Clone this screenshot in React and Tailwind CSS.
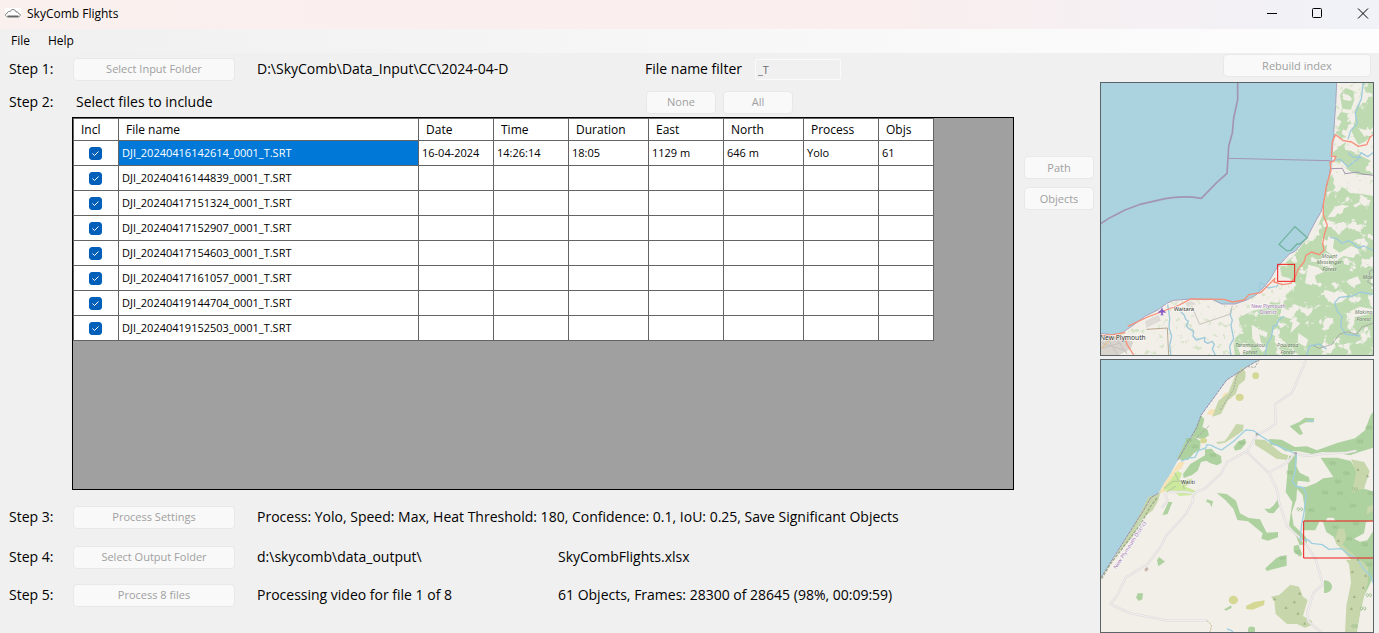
import { useState } from "react";

const FILES = [
  { name: "DJI_20240416142614_0001_T.SRT", cells: ["16-04-2024", "14:26:14", "18:05", "1129 m", "646 m", "Yolo", "61"] },
  { name: "DJI_20240416144839_0001_T.SRT", cells: [] },
  { name: "DJI_20240417151324_0001_T.SRT", cells: [] },
  { name: "DJI_20240417152907_0001_T.SRT", cells: [] },
  { name: "DJI_20240417154603_0001_T.SRT", cells: [] },
  { name: "DJI_20240417161057_0001_T.SRT", cells: [] },
  { name: "DJI_20240419144704_0001_T.SRT", cells: [] },
  { name: "DJI_20240419152503_0001_T.SRT", cells: [] },
];

const COLUMNS = [
  { title: "Incl", width: "w-[45px]" },
  { title: "File name", width: "w-[300px]" },
  { title: "Date", width: "w-[75px]" },
  { title: "Time", width: "w-[75px]" },
  { title: "Duration", width: "w-[80px]" },
  { title: "East", width: "w-[75px]" },
  { title: "North", width: "w-[80px]" },
  { title: "Process", width: "w-[75px]" },
  { title: "Objs", width: "w-[55px]" },
];

function DisabledButton({ children, className }) {
  return (
    <button
      type="button"
      disabled
      className={`flex h-[23px] shrink-0 items-center justify-center rounded border border-[#e8e8e8] bg-[#f9f9f9] text-[11px] text-[#a0a0a0] ${className}`}
    >
      {children}
    </button>
  );
}

function StepLabel({ children }) {
  return <span className="w-16 shrink-0">{children}</span>;
}

function TitleBar() {
  return (
    <header className="flex h-[29px] items-center bg-linear-to-r from-[#faf0ee] via-[#faeeee] via-65% to-[#f0f2f8] pb-0.5">
      <svg className="ml-1 h-4 w-[18px]" viewBox="0 0 18 16" fill="none">
        <rect x="1" y="2" width="16" height="10" fill="#fff" />
        <path d="M3.5 11C1 10.500.9 7.800 3.200 7.300 3.600 5.500 5.200 5 6.200 5.600 7 2.900 11.200 2.800 12 5.900c2-.2 2.300.7 2.500 1.600 2.300.2 2.400 3.200 0 3.500" stroke="#777" strokeWidth="1" />
        <path d="M3.500 10.500h11" stroke="#666" strokeWidth="2" />
      </svg>
      <h1 className="ml-[5px] flex-1 text-xs">SkyComb Flights</h1>
      <div className="flex h-full">
        <button type="button" aria-label="Minimize" className="flex w-[45px] items-center justify-center">
          <svg width="12" height="12" viewBox="0 0 12 12" stroke="#000"><path d="M1 5.500h10" /></svg>
        </button>
        <button type="button" aria-label="Maximize" className="flex w-[46px] items-center justify-center">
          <svg width="12" height="12" viewBox="0 0 12 12" fill="none" stroke="#000"><rect x="1.500" y=".500" width="9" height="9" rx="1" /></svg>
        </button>
        <button type="button" aria-label="Close" className="flex w-[39px] items-center justify-center pl-1.5">
          <svg width="12" height="12" viewBox="0 0 12 12" fill="none" stroke="#000"><path d="M1 .500l10 10M11 .500l-10 10" /></svg>
        </button>
      </div>
    </header>
  );
}

function FileTable() {
  const [included, setIncluded] = useState(FILES.map(() => true));
  const toggle = (i) => setIncluded(included.map((v, k) => (k === i ? !v : v)));
  return (
    <table className="table-fixed border-separate border-spacing-0 border-t border-l border-[#646464] bg-white text-xs">
      <thead>
        <tr className="h-[22px]">
          {COLUMNS.map((c) => (
            <th key={c.title} className={`border-r border-b border-[#646464] py-0 pl-[7px] text-left font-normal ${c.width}`}>
              {c.title}
            </th>
          ))}
        </tr>
      </thead>
      <tbody>
        {FILES.map((f, i) => (
          <tr key={f.name} className="h-[25px]">
            <td className="border-r border-b border-[#646464] p-0">
              <div className="grid place-items-center pr-[2px]">
                <input
                  type="checkbox"
                  aria-label={`Include ${f.name}`}
                  checked={included[i]}
                  onChange={() => toggle(i)}
                  className="[grid-area:1/1] size-[13px] appearance-none rounded-[3px] border border-[#005fb8] bg-white checked:bg-[#005fb8]"
                />
                {included[i] && (
                  <svg className="pointer-events-none [grid-area:1/1]" width="13" height="13" viewBox="0 0 13 13" fill="none" stroke="#fff">
                    <path d="M3.500 6.500l2 2 4-4" />
                  </svg>
                )}
              </div>
            </td>
            <td className={`border-r border-b border-[#646464] py-0 pl-[3px] text-[11px] ${i === 0 ? "bg-[#0078d7] text-white" : ""}`}>
              {f.name}
            </td>
            {COLUMNS.slice(2).map((c, k) => (
              <td key={c.title} className="border-r border-b border-[#646464] py-0 pl-[3px] text-[11px]">
                {f.cells[k]}
              </td>
            ))}
          </tr>
        ))}
      </tbody>
    </table>
  );
}

function RegionMap() {
  const coast =
    "M725 12L722 80 716 165 710 245 703 290 692 350 678 402 665 424 650 452 637 478 618 500 600 520 583 528 570 542 545 570 525 605 500 635 480 653 455 666 420 678 380 678 350 663 330 665 290 663 235 667 215 676 190 695 150 715 110 745 80 765 50 770 15 766";
  const forest =
    "M735 50L752 30 775 38 778 65 768 95 742 92ZM803 12H837V165L812 190 790 200 776 175 738 180 722 165 740 130 724 122 738 102 770 108 790 75ZM735 205L752 192 750 215 768 218 830 250 837 292 790 290 765 280 725 250 712 225ZM704 295L725 300 720 322 748 330 765 345 837 350V834H420L415 790 440 755 430 720 470 700 510 690 540 660 570 655 605 620 582 600 560 595 555 568 595 535 638 480 652 484 685 405 690 350Z";
  const gaps =
    "M712 285l30 0 10 24 36 18 49 14v14l-30-6-12-16-30-4-6-22-26 4-10 20ZM700 474l18 8-4 28 20 14 34-20 24 10-16 26-30-6-24 16-10-18-18-14ZM640 560l30 8 16 14-24 10-12 30-20-6ZM690 635l40 12 14 24-30 6-24-20ZM560 690l40 12-8 20 24 14-30 30 10-40-40-14ZM610 765l30 20-8 22-24-14ZM470 740l20 12 8 40 18 20-14 10-30-40ZM760 605l28-10 10 20-28 12ZM765 700l30-14 42 8v12l-60 12ZM716 392l24-12 24 4-28 12-16 20-22 2ZM790 150l30 8-10 20Z";
  return (
    <svg className="block h-auto w-full" viewBox="15 12 822 822" role="img" aria-label="Region map">
      <defs>
        <clipPath id="region-land"><path d={`${coast}V834H837V12Z`} /></clipPath>
        <clipPath id="region-forest"><path d={forest} /></clipPath>
        <filter id="clearings" x="0" y="0" width="1" height="1" colorInterpolationFilters="sRGB">
          <feTurbulence type="fractalNoise" baseFrequency=".028" numOctaves="4" seed="8" />
          <feColorMatrix values="0 0 0 0 .949  0 0 0 0 .937  0 0 0 0 .914  14 0 0 0 -8" />
        </filter>
        <filter id="scrub" x="0" y="0" width="1" height="1" colorInterpolationFilters="sRGB">
          <feTurbulence type="fractalNoise" baseFrequency=".06" numOctaves="3" seed="21" />
          <feColorMatrix values="0 0 0 0 .8  0 0 0 0 .88  0 0 0 0 .74  14 0 0 0 -9" />
        </filter>
      </defs>
      <rect x="15" y="12" width="822" height="822" fill="#aad3df" />
      <path d={`${coast}V834H837V12Z`} fill="#f2efe9" stroke="#a9a3c0" strokeWidth="3" />
      <g clipPath="url(#region-land)">
        <rect x="15" y="12" width="822" height="822" filter="url(#scrub)" opacity=".7" />
        <path d={forest} fill="#bddab1" />
        <g clipPath="url(#region-forest)">
          <rect x="400" y="12" width="437" height="822" filter="url(#clearings)" />
        </g>
        <path d={gaps} fill="#f2efe9" />
        <path d="M15 790l30-14 40 2 30 14-8 20-40 22H15Z" fill="#d9d3ce" />
        <path d="M150 730l40-20 8 18-44 22ZM270 675l20-6 14 10-28 6Z" fill="#dedad6" />
        <path d="M22 796l70 22M38 782l30 50M60 776l36 52M15 812l80-22" stroke="#c8c2c0" strokeWidth="3" fill="none" />
      </g>
      <g fill="none" stroke="#9ecadb" strokeWidth="4" strokeLinejoin="round">
        <path d="M805 12l-6 50-18 44 6 30-20 22-8 26M715 165l6 8M712 248l24-4 22 22 30-22 10-20 20 12 19-14M760 225l14 12 26 2M705 478l20 4 16 14 20-8 16 10 12 12 18-6 30 14M540 626l-20 4-24-18-4 34M550 620l-8 8" />
        <path d="M218 680l6 40-2 30 8 24-6 28 4 32M256 700l12 12 4 12 8 6-6 14 8 8 14 8-2 14 10 12 26-8-2 12 10 6 14-6 6 10-6 12 10 22M410 690l-4 22 6 14-4 16 8 40-12 22 4 30M566 715l-16 12-4 14-12 4-4 30-14 24-6 35M837 650l-40-8-24 12-40 4-14 16 8 26 14 16-4 28 14 24 44 6M635 834l8-30 30-6 22 16" />
      </g>
      <g fill="none" stroke="#a395b1" strokeWidth="5" strokeLinejoin="round">
        <path d="M428 12V65L416 120 412 165 401 205 399 240 396 286 365 314 319 361Q265 352 210 362L132 380 90 396 45 419 15 438" />
        <path d="M399 241L706 248" strokeWidth="3" />
        <path d="M706 250l2 22 34-1 8 16 38-5 12 6 37 4" strokeWidth="3" />
      </g>
      <path d="M837 573l-14 8 2 20-8 10 20 12M837 735l-36 12-16 22-28-8-24 8-22 30-38 12-18-8" fill="none" stroke="#9b979d" strokeWidth="2" />
      <g fill="none" stroke="#c9c3ba" strokeWidth="3">
        <path d="M290 684l24 55 90-30 8-26" />
        <path d="M155 754l62-4 4 84" stroke="#b9a890" />
        <path d="M15 815l28-28 40-20" stroke="#e8bb70" />
      </g>
      <g fill="none" stroke="#f78f78" strokeWidth="4" strokeLinejoin="round">
        <path d="M837 168l-12 10-10 22-25 5-20-13-25-4-23-18-10 20-3 45h14l-6 14-12 4 3 25-13 42-10 60v30l12 32-8 24-6 30 4 20-14 14-24-8-16 10-6 20-18 22-8 22-14 20-24 4-26-8 2-10-42 42-35 6-15 16-34 6-26-8-100-1-34 18-95 36-60 28" />
        <path d="M90 775l6 24 20 32M15 772l42-2 34-6" />
      </g>
      <path d="M552 499L600 446 637 479 614 498 606 498 588 517 575 518Z" fill="none" stroke="#72b49f" strokeWidth="4" />
      <path d="M201 688l3 8 8 6v3l-8-2-1 6 4 3h-12l4-3-1-6-8 2v-3l8-6Z" fill="#8057c4" />
      <g fontFamily="'Noto Sans', sans-serif" stroke="#fff" strokeOpacity=".65" strokeWidth="4" paintOrder="stroke">
        <text x="236" y="700" fontSize="17" fill="#333">Waitara</text>
        <text x="15" y="786" fontSize="20" fill="#333">New Plymouth</text>
        <g fontStyle="italic" fontSize="16" textAnchor="middle" fill="#6d8068" strokeOpacity=".25">
          <text x="703" y="540">Mount</text>
          <text x="703" y="559">Messenger</text>
          <text x="703" y="578">Forest</text>
          <text x="818" y="602">Mok</text>
          <text x="806" y="709">Makino</text>
          <text x="806" y="728">Forest</text>
          <text x="465" y="808">Taramoukou</text>
          <text x="465" y="827">Forest</text>
          <text x="578" y="808">Pouiatoa</text>
          <text x="578" y="827">Forest</text>
        </g>
        <g fontSize="15" textAnchor="middle" fill="#a174b0">
          <text x="520" y="690">New Plymouth</text>
          <text x="520" y="708">District</text>
        </g>
      </g>
      <rect x="548" y="559" width="51" height="51" fill="none" stroke="#f01818" strokeWidth="3" />
      <rect x="16.500" y="13.500" width="819" height="819" fill="none" stroke="#5a6468" strokeWidth="3" />
    </svg>
  );
}

const TREES = [
  [822, 215], [795, 257], [713, 322], [755, 352], [729, 377], [780, 400], [828, 412], [690, 410], [649, 463], [714, 458], [774, 449], [735, 412],
  [722, 514], [783, 503], [762, 549], [810, 566], [822, 626], [805, 758], [779, 811], [300, 272], [282, 252], [354, 298], [608, 589], [562, 606], [584, 350], [440, 262], [822, 718], [615, 460],
];
const SHRUBS = [
  [789, 341], [817, 360], [789, 610], [772, 647], [812, 658], [805, 695], [778, 722], [769, 758], [730, 554], [539, 729], [614, 712], [598, 738], [573, 755], [609, 772], [629, 802],
];

function DetailMap() {
  const coast =
    "M497 9L460 30 395 72 318 178 305 215 275 265 250 310 220 365 190 412 168 424 140 472 100 535 60 598 15 670V831H837V9Z";
  const roads =
    "M634 9l-20 48-24 54-50 34 2 58-16 12-40 22-30 48-60 34-18 34-48 44-34 14-4 28-20 36-58 64-20 38-36 46-66 42-26 54-22 28M454 286l66 64 60-32 20-28M522 350l24 52 6 36 24 72 56 52 30 48 22 76-28 24-20 62 4 24 40 34M600 292l34 8 70-8 52-2 28-6M48 746l60 26 110 22h120M296 414l-20-6h-54M210 412l8 22-18 22";
  return (
    <svg className="block h-auto w-full" viewBox="15 9 822 822" role="img" aria-label="Flight area map">
      <rect x="15" y="9" width="822" height="822" fill="#aad3df" />
      <path d={coast} fill="#f2efe9" />
      <g fill="#f8e2b8">
        <path d="M396 107l-12 8-4 22 14-4ZM368 160l-22 0-12 14 26 6ZM320 180l-12 38 4 12 14-30ZM252 318l18 0-12 20-16 8-32 62-18 4 16-32 30-42Z" />
      </g>
      <g fill="#aed1a0">
        <path d="M318 178l10 12-6 22 16 10 4 16-18 12-34-8 14-30Z" />
        <path d="M275 250l20-8 22 14-2 24-18 12-18 20-20 0-12-6ZM330 280l20-2 10 12 18 10 2 20-14 8-20-6-12-8-16 4-10 26-18 14-24 8-2-12 22-30 24-14 20-12Z" />
        <path d="M416 274l14-18 20-8 4 12-16 20-18 4ZM584 211l30-14 16-12 28 2-2 12-24 0-20 10 12 24-10 4-18-16Z" />
        <path d="M522 249l38 2 40 22 36-2 30 12 60-22 54-14 30-24 16-44 13-18V274l-46 14-28 10-40-8-44-2-30 6-40-8-40 0-22-16-24-4Z" />
        <path d="M677 305h50l40 10 20 34-8 40 58 18v92l-14 12-30-12-40 30-22-20-16-24-18 0-18 38-56 0 8-54-8-52-24-26 34 2 30-12 22-14 30-4Z" />
        <path d="M582 300l24-4-2 34 10 20 28 14 2 14-36-4-4 56-14 40 6 38 40 38v18l-22 4-14-36-18-24 10-70-20-30Z" />
        <path d="M682 495h155V660l-30 60-12 52-10 59h-24l10-56 24-34 4-60-30-48-26-36-30-20-24-30Z" />
        <path d="M365 411l30 3 28 20 12 38 26 14 34 4 20 40 34-2v16l-30 10-20-6 4-16-44-36-32-4-12-34-24-26ZM508 458l16 0 12-10 14-20 2 24-16 20-16-2ZM220 438h12l-14 36-16 4ZM336 430l18 6-4 18-6-12-10-4ZM192 603l18 14-20 14-4-18ZM128 712l16 0-2 18-10 5-9-10ZM575 597v32l-60 16-4-8 34-32ZM596 570l14-4 12 30-8 6-18-16ZM687 673c32 0 32 38 0 38ZM388 760l20-12 2 8-18 8ZM460 815q10-7 20 0v16h-22Z" />
      </g>
      <g fill="#c8d7ab">
        <path d="M442 32l10 18-2 22-18 14-10 28-24 20-20 40-26 8 18-48 30-24 20-50ZM362 258l26-2 10-12 26-40 22 2-2 18-26 18-28 18-20 4ZM480 250l30 2 50 40 20 6-4 14-32-4-64-42ZM190 414l8-12-8 30-16 30-30 24-34 60-48 54-38 62 80-134 28-48 28-58Z" />
        <path d="M768 310l40 8 16 28-16 50-38 14 14-60ZM730 518l18 0 6 28-12 20 42 36 36 30-2 50-20 68-14 80h-34l4-80 14-70-6-56-46-62ZM528 722l26-6 32-30 26 6 12 30 14 10-14 48 26 14 2 12-22 10-24-12-30 0-34-30-4-38ZM818 452l19-6v16l-22 14Z" />
        <path d="M214 386l32-24 14 12 32-6-8 18-50 14Z" fill="#bfe08d" />
      </g>
      <path d="M203 402l44-58 14 8-8 22 14 16 38 16-4 10-48 4-16-14Z" fill="#cdea9c" />
      <path d="M208 396l26-20 28 0 6 24M215 408l28-18M240 350l10 24" stroke="#b9cfa0" strokeWidth="4" fill="none" />
      <g fill="#d5d795">
        <ellipse cx="482" cy="59" rx="10" ry="10" /><ellipse cx="434" cy="124" rx="12" ry="11" /><ellipse cx="326" cy="254" rx="10" ry="8" />
        <ellipse cx="415" cy="732" rx="14" ry="13" /><path d="M453 750l24-12 32-5-2 14-34 14-20-2Z" />
      </g>
      <path d="M630 534l26-2 18-36 10 2 10 30 22 14 8 22 20 20 24 28-126-4 4-30ZM777 548l30-16 6-34 24-3v26l-20 32-22 4Z" fill="#f2efe9" />
      <g fill="none" strokeLinejoin="round">
        <path d={roads} stroke="#dfdbdb" strokeWidth="7" />
        <path d={roads} stroke="#f3f1f1" strokeWidth="3" />
        <g stroke="#9fd0e0" strokeWidth="4">
          <path d="M258 316l22-10 20-2 10-20 22-8 4-10 14 2 10 6 20 8 36-26 36-34 24 2 22 16 34 22 40 18 32 14-4 54-8 28 10 14 24 6 8 20-8 60-6 28-4 46 24 2 10 10 32 4 20 14 38-2 22 18 24 12 22 34 20 18 11 34" />
          <path d="M636 193l20 2M396 819l14 5 6 7" />
        </g>
        <path d="M497 9l-37 21-65 42-77 106-13 37-30 50-27 48M190 412l-22 12-28 48-40 63-40 63-45 72" stroke="#958eaa" strokeWidth="3" strokeDasharray="10 2" />
        <path d="M492 12l-12 22-26-2-14 14-14 10-10 44-22 34-18 28M300 250l44-42" stroke="#a9aba2" strokeWidth="3" strokeDasharray="7 3" />
        <path d="M186 426l-20 26-30 54-44 58-46 60-26 44" stroke="#9dab8c" strokeWidth="4" strokeDasharray="9 4" />
        <path d="M336 794l14 14-6 23" stroke="#c7b58c" strokeWidth="3" strokeDasharray="6 3" />
      </g>
      <path d="M148 640l8-8 5 8-9 8Z" fill="#c9b4ab" />
      <circle cx="486" cy="235" r="4" fill="#aaa" /><circle cx="602" cy="292" r="4" fill="#aaa" />
      <g fill="none" stroke="#95bd8a" strokeWidth="2">
        {TREES.map(([x, y]) => (
          <path key={`${x}-${y}`} d={`M${x - 1} ${y}a4 4 0 1 1-1-4q2 6-4 10M${x + 8} ${y}a4 4 0 1 1-1-4q2 6-4 10`} />
        ))}
      </g>
      <g fill="#a5b488">
        {SHRUBS.map(([x, y]) => (
          <path key={`${x}-${y}`} d={`M${x} ${y - 5}l5 9h-10Z`} />
        ))}
      </g>
      <g fontFamily="'Noto Sans', sans-serif" stroke="#fff" strokeOpacity=".6" strokeWidth="4" paintOrder="stroke">
        <text x="258" y="384" fontSize="16" fill="#333">Waiiti</text>
        <text x="64" y="640" fontSize="16" fill="#a174b0" transform="rotate(-57 64 640)">New Plymouth District</text>
      </g>
      <path d="M837 495H626V606H837" fill="none" stroke="#f01818" strokeWidth="3" />
      <rect x="16.500" y="10.500" width="819" height="819" fill="none" stroke="#5a6468" strokeWidth="3" />
    </svg>
  );
}

export default function App() {
  return (
    <div className="flex min-h-screen flex-col bg-[#f0f0f0] font-['Open_Sans','Noto_Sans',sans-serif] text-sm text-black">
      <TitleBar />
      <nav className="flex h-6 items-center gap-2 bg-linear-to-r from-[#f0f0f0] to-[#fdfdfd] px-[7px] text-xs">
        <button type="button" className="px-1">File</button>
        <button type="button" className="px-[6px]">Help</button>
      </nav>
      <main className="flex flex-1 pr-[5px]">
        <div className="flex min-w-0 flex-1 flex-col pl-[9px]">
          <div className="mt-1 flex h-6 items-center">
            <StepLabel>Step 1:</StepLabel>
            <DisabledButton className="w-[162px]">Select Input Folder</DisabledButton>
            <span className="ml-[22px] w-[388px]">D:\SkyComb\Data_Input\CC\2024-04-D</span>
            <label htmlFor="filter" className="w-[110px]">File name filter</label>
            <input
              id="filter"
              disabled
              defaultValue="_T"
              className="h-[21px] w-[86px] rounded-xs border border-[#fafafa] bg-[#f0f0f0] px-[2px] text-[11px] text-[#6d6d6d]"
            />
          </div>
          <div className="mt-[9px] flex h-6 items-center">
            <StepLabel>Step 2:</StepLabel>
            <span className="w-[573px] pl-[3px]">Select files to include</span>
            <DisabledButton className="w-[70px]">None</DisabledButton>
            <DisabledButton className="ml-[7px] w-[70px]">All</DisabledButton>
          </div>
          <div className="mt-[3px] flex flex-1 pl-[63px]">
            <section className="min-w-0 flex-1 border border-black bg-[#a0a0a0]">
              <FileTable />
            </section>
            <div className="mr-[6px] ml-[10px] flex flex-col gap-2 pt-[39px]">
              <DisabledButton className="w-[70px]">Path</DisabledButton>
              <DisabledButton className="w-[70px]">Objects</DisabledButton>
            </div>
          </div>
          <div className="mt-[15px] flex h-6 items-center">
            <StepLabel>Step 3:</StepLabel>
            <DisabledButton className="w-[162px]">Process Settings</DisabledButton>
            <span className="ml-[22px]">Process: Yolo, Speed: Max, Heat Threshold: 180, Confidence: 0.1, IoU: 0.25, Save Significant Objects</span>
          </div>
          <div className="mt-4 flex h-6 items-center">
            <StepLabel>Step 4:</StepLabel>
            <DisabledButton className="w-[162px]">Select Output Folder</DisabledButton>
            <span className="ml-[22px] w-[301px]">d:\skycomb\data_output\</span>
            <span>SkyCombFlights.xlsx</span>
          </div>
          <div className="mt-[14px] mb-[26px] flex h-6 items-center">
            <StepLabel>Step 5:</StepLabel>
            <DisabledButton className="w-[162px]">Process 8 files</DisabledButton>
            <span className="ml-[22px] w-[301px]">Processing video for file 1 of 8</span>
            <span>61 Objects, Frames: 28300 of 28645 (98%, 00:09:59)</span>
          </div>
        </div>
        <aside className="flex w-1/5 max-w-[274px] shrink-0 flex-col">
          <DisabledButton className="mt-px mr-[3px] mb-[5px] w-[148px] self-end">Rebuild index</DisabledButton>
          <RegionMap />
          <div className="mt-[3px]"><DetailMap /></div>
        </aside>
      </main>
    </div>
  );
}
